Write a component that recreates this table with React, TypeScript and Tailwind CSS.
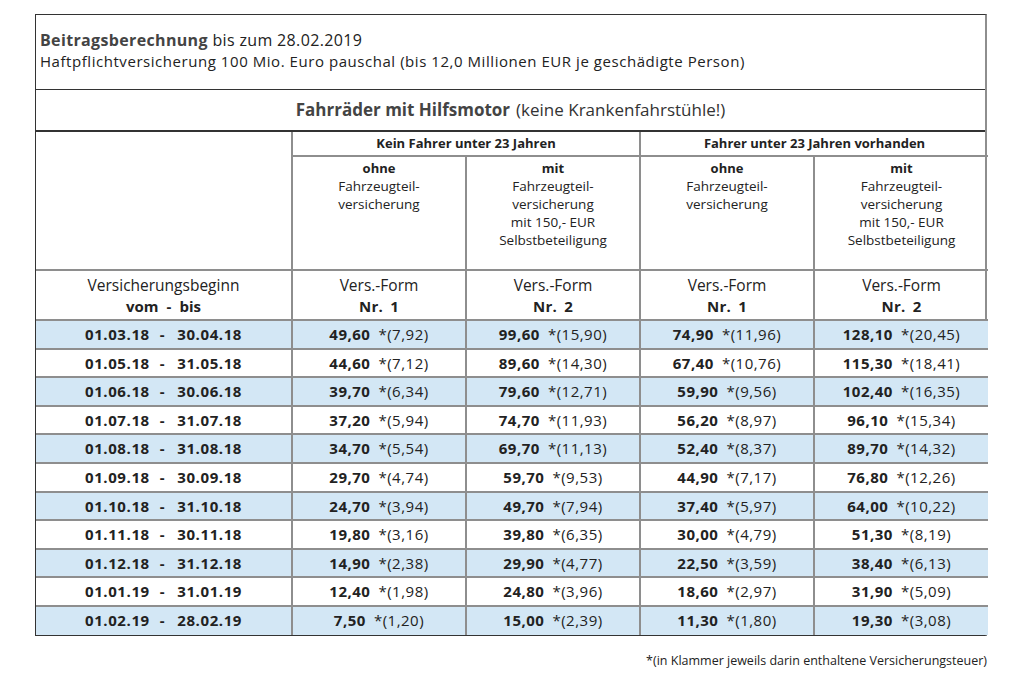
const rows: [string, string, [string, string][]][] = [
  ['01.03.18', '30.04.18', [['49,60', '7,92'], ['99,60', '15,90'], ['74,90', '11,96'], ['128,10', '20,45']]],
  ['01.05.18', '31.05.18', [['44,60', '7,12'], ['89,60', '14,30'], ['67,40', '10,76'], ['115,30', '18,41']]],
  ['01.06.18', '30.06.18', [['39,70', '6,34'], ['79,60', '12,71'], ['59,90', '9,56'], ['102,40', '16,35']]],
  ['01.07.18', '31.07.18', [['37,20', '5,94'], ['74,70', '11,93'], ['56,20', '8,97'], ['96,10', '15,34']]],
  ['01.08.18', '31.08.18', [['34,70', '5,54'], ['69,70', '11,13'], ['52,40', '8,37'], ['89,70', '14,32']]],
  ['01.09.18', '30.09.18', [['29,70', '4,74'], ['59,70', '9,53'], ['44,90', '7,17'], ['76,80', '12,26']]],
  ['01.10.18', '31.10.18', [['24,70', '3,94'], ['49,70', '7,94'], ['37,40', '5,97'], ['64,00', '10,22']]],
  ['01.11.18', '30.11.18', [['19,80', '3,16'], ['39,80', '6,35'], ['30,00', '4,79'], ['51,30', '8,19']]],
  ['01.12.18', '31.12.18', [['14,90', '2,38'], ['29,90', '4,77'], ['22,50', '3,59'], ['38,40', '6,13']]],
  ['01.01.19', '31.01.19', [['12,40', '1,98'], ['24,80', '3,96'], ['18,60', '2,97'], ['31,90', '5,09']]],
  ['01.02.19', '28.02.19', [['7,50', '1,20'], ['15,00', '2,39'], ['11,30', '1,80'], ['19,30', '3,08']]],
];

const cell = 'border-2 border-[#8e8e8e]';

function SubHead({ mit }: { mit: boolean }) {
  return (
    <td className={`${cell} align-top pt-[2px] text-center text-[13.5px] leading-[18px]`}>
      <div className="text-[13px] font-bold">{mit ? 'mit' : 'ohne'}</div>
      <div>Fahrzeugteil-</div>
      <div>versicherung</div>
      {mit ? (
        <>
          <div>mit 150,- EUR</div>
          <div>Selbstbeteiligung</div>
        </>
      ) : null}
    </td>
  );
}

function FormHead({ nr }: { nr: number }) {
  return (
    <td className={`${cell} text-center align-top pt-[4px]`}>
      <div className="text-[15.5px] leading-[21px]">Vers.-Form</div>
      <div className="text-[15px] font-bold leading-[21px] tracking-[0.3px]">
        Nr.<span className="ml-[7px]">{nr}</span>
      </div>
    </td>
  );
}

export default function App() {
  return (
    <div
      className="min-h-[686px] bg-white text-[#222]"
      style={{ fontFamily: '"Open Sans", "Liberation Sans", sans-serif' }}
    >
      <div className="ml-[35px] pt-[14px] w-[952px]">
        <div className="border-l border-t border-b border-r-2 border-l-[#333] border-t-[#333] border-b-[#333] border-r-[#8e8e8e]">
          <div className="h-[75px] border-b border-[#333] pl-[4px] pt-[15px]">
            <div className="text-[16px] leading-[20px] tracking-[0.35px]">
              <span className="font-bold text-[#444]">Beitragsberechnung</span> bis zum 28.02.2019
            </div>
            <div className="text-[15px] leading-[22px] tracking-[0.55px]">
              Haftpflichtversicherung 100 Mio. Euro pauschal (bis 12,0 Millionen EUR je geschädigte Person)
            </div>
          </div>
          <div className="flex h-[42px] items-center justify-center border-b-2 border-[#333] text-[17px]">
            <span className="font-bold text-[#444]">Fahrräder mit Hilfsmotor</span>
            <span className="ml-[6px] text-[#333]">(keine Krankenfahrstühle!)</span>
          </div>
          <table className="w-full table-fixed border-collapse border-hidden">
            <colgroup>
              <col className="w-[256px]" />
              <col className="w-[174px]" />
              <col className="w-[174px]" />
              <col className="w-[174px]" />
              <col className="w-[174px]" />
            </colgroup>
            <tbody>
              <tr className="h-[24px]">
                <td rowSpan={2} className={cell} />
                <td colSpan={2} className={`${cell} text-center text-[13px] font-bold`}>
                  Kein Fahrer unter 23 Jahren
                </td>
                <td colSpan={2} className={`${cell} text-center text-[13px] font-bold`}>
                  Fahrer unter 23 Jahren vorhanden
                </td>
              </tr>
              <tr className="h-[114px]">
                <SubHead mit={false} />
                <SubHead mit />
                <SubHead mit={false} />
                <SubHead mit />
              </tr>
              <tr className="h-[50px]">
                <td className={`${cell} text-center align-top pt-[4px]`}>
                  <div className="text-[15.5px] leading-[21px]">Versicherungsbeginn</div>
                  <div className="text-[15px] font-bold leading-[21px]">
                    vom<span className="mx-[8px]">-</span>bis
                  </div>
                </td>
                <FormHead nr={1} />
                <FormHead nr={2} />
                <FormHead nr={1} />
                <FormHead nr={2} />
              </tr>
              {rows.map(([from, to, vals], i) => (
                <tr key={from} className={`h-[28.6px] ${i % 2 === 0 ? 'bg-[#d3e7f5]' : 'bg-white'}`}>
                  <td className={`${cell} text-center text-[15px] font-bold tracking-[0.6px]`}>
                    {from}
                    <span className="ml-[10px] mr-[12px]">-</span>
                    {to}
                  </td>
                  {vals.map(([v, tax], j) => (
                    <td key={j} className={`${cell} text-center text-[15px] tracking-[0.5px]`}>
                      <span className="font-bold">{v}</span>
                      <span className="ml-[8px]">*({tax})</span>
                    </td>
                  ))}
                </tr>
              ))}
            </tbody>
          </table>
        </div>
        <div className="mt-[16px] text-right text-[12.5px] text-[#222]">
          *(in Klammer jeweils darin enthaltene Versicherungsteuer)
        </div>
      </div>
    </div>
  );
}
